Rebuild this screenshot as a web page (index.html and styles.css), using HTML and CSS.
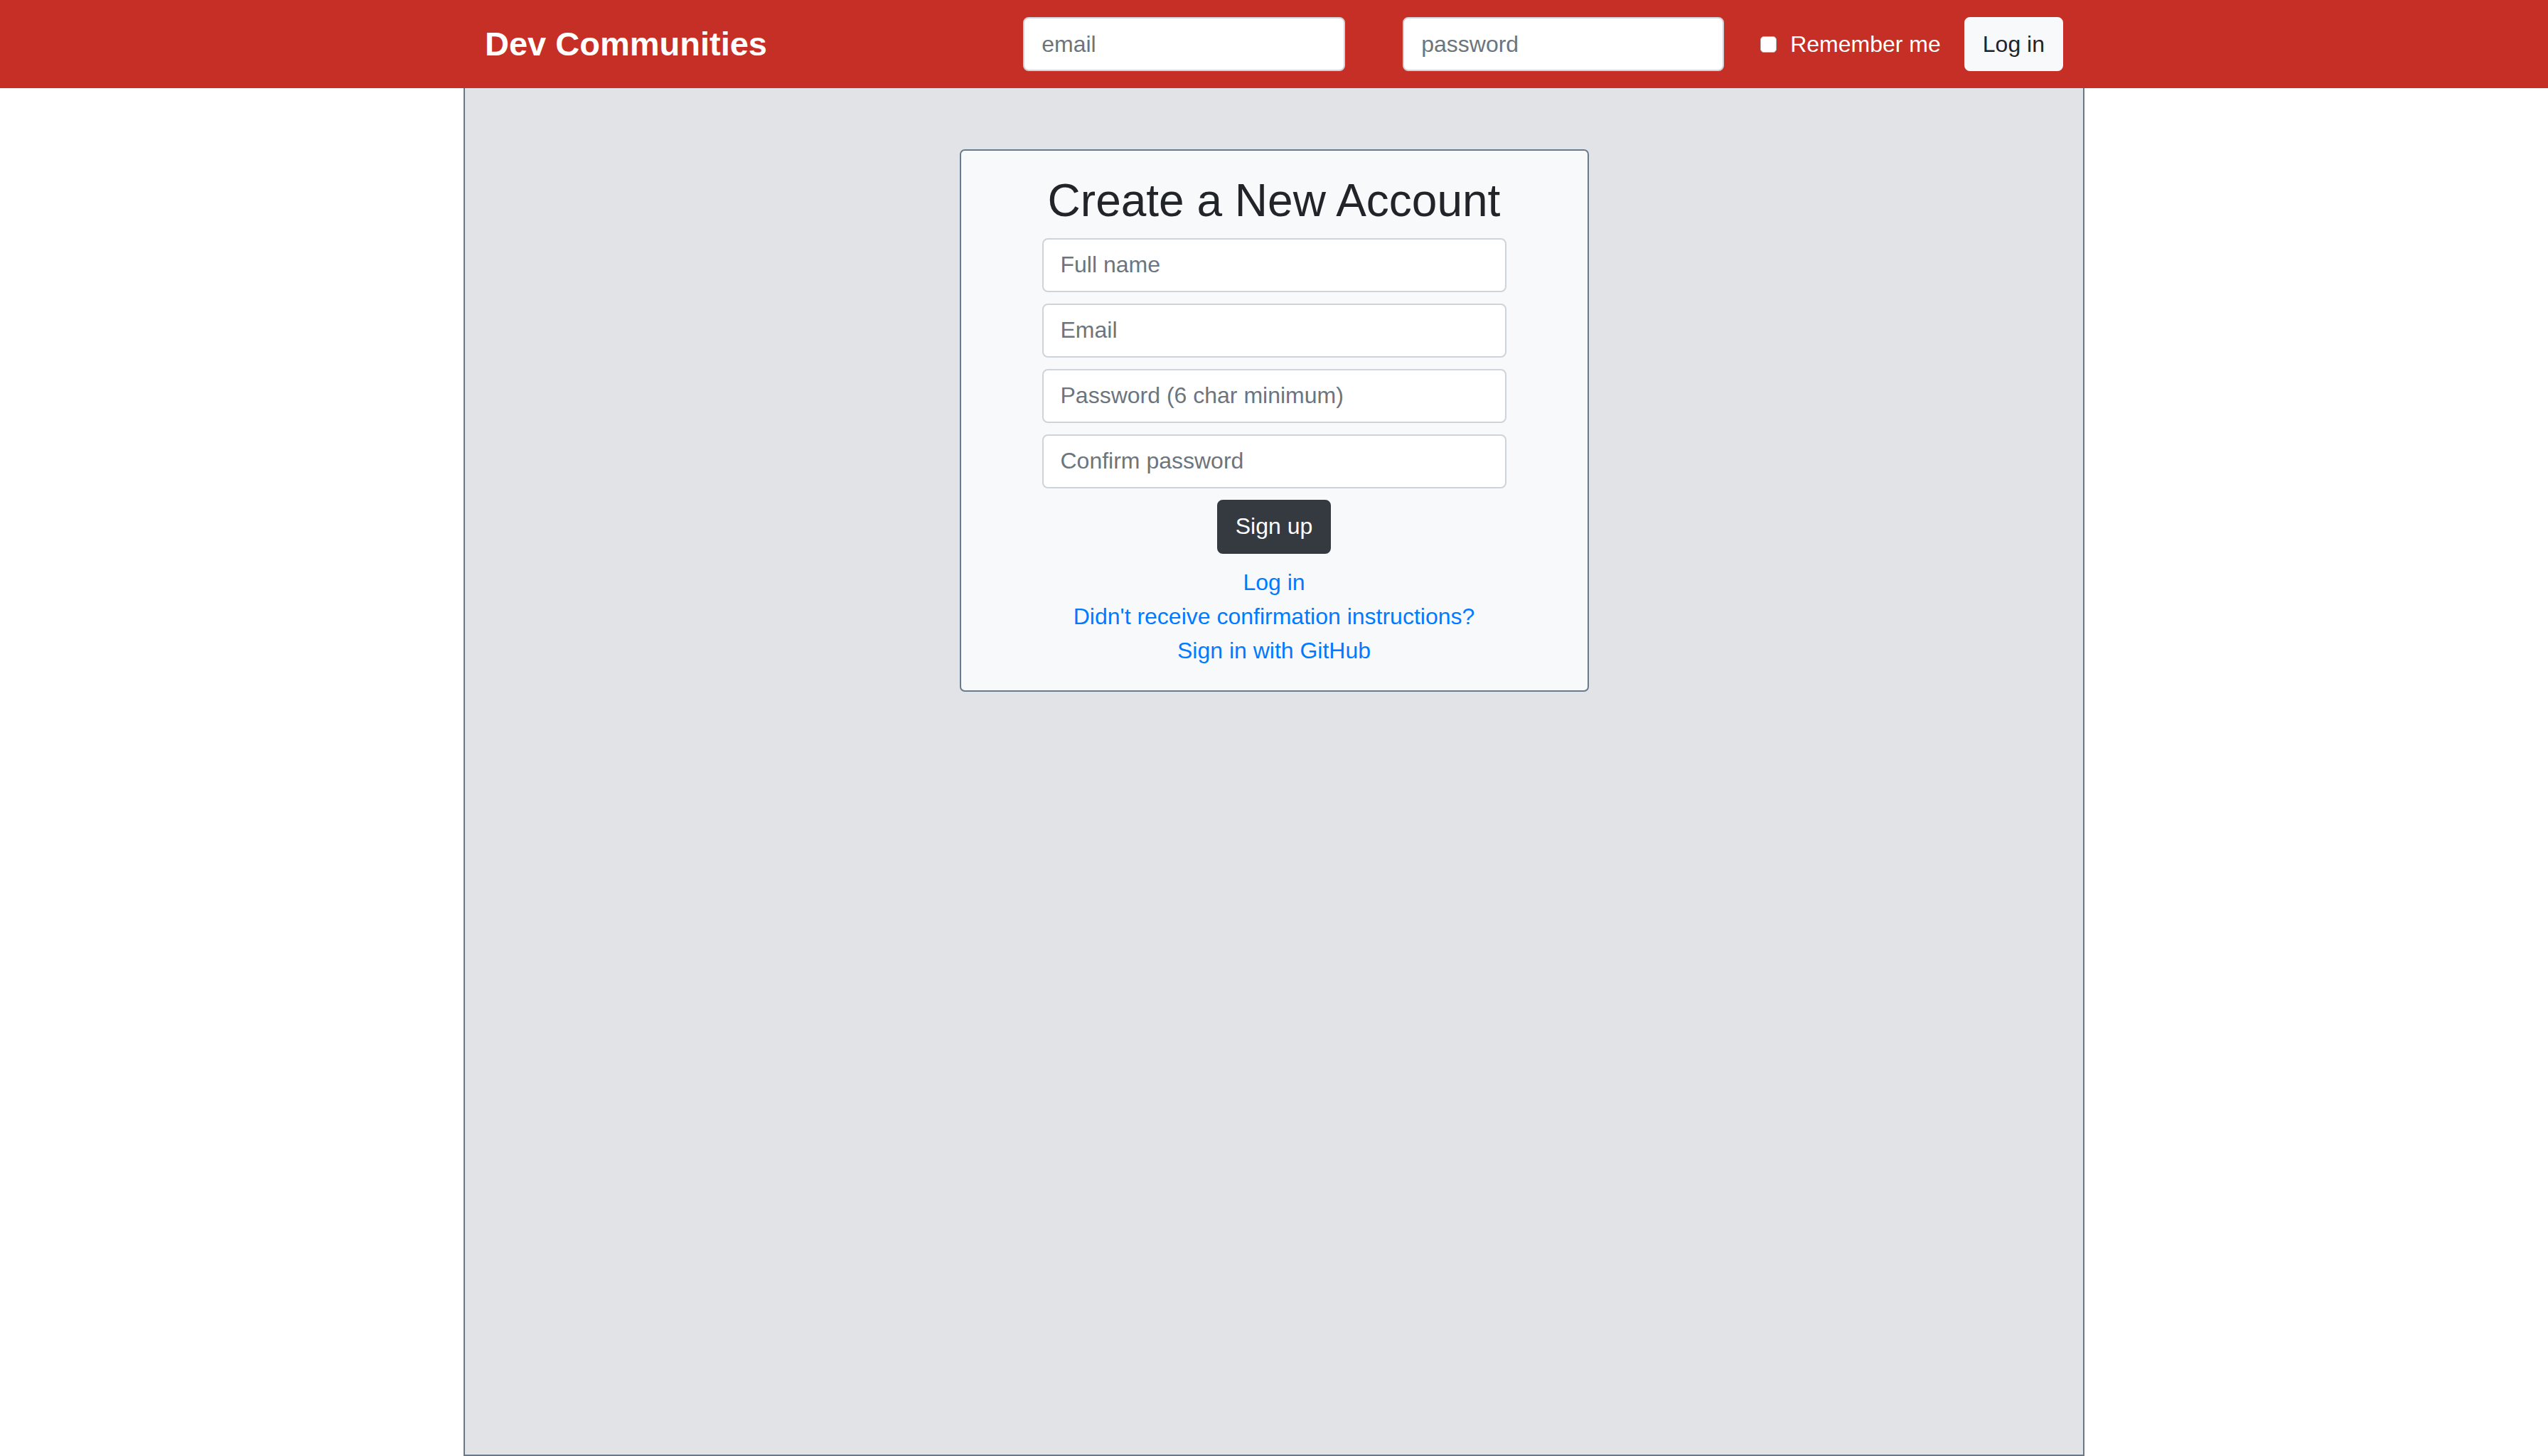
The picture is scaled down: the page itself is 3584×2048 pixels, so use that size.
FILE: index.html
```html
<!DOCTYPE html>
<html lang="en">
<head>
<meta charset="utf-8">
<title>Dev Communities</title>
<link rel="stylesheet" href="styles.css">
</head>
<body>
<nav class="navbar">
  <div class="navbar-inner">
    <a class="brand" href="#">Dev Communities</a>
    <form class="login-form">
      <input class="nav-input nav-email" type="email" placeholder="email">
      <input class="nav-input nav-password" type="password" placeholder="password">
      <label class="remember"><input class="check" type="checkbox"><span>Remember me</span></label>
      <button class="btn-light" type="button">Log in</button>
    </form>
  </div>
</nav>
<main class="main">
  <div class="card">
    <h2 class="title">Create a New Account</h2>
    <form class="signup-form">
      <input class="field" type="text" placeholder="Full name">
      <input class="field" type="email" placeholder="Email">
      <input class="field" type="password" placeholder="Password (6 char minimum)">
      <input class="field" type="password" placeholder="Confirm password">
      <button class="btn-dark" type="button">Sign up</button>
    </form>
    <div class="links">
      <a href="#">Log in</a>
      <a href="#">Didn't receive confirmation instructions?</a>
      <a href="#">Sign in with GitHub</a>
    </div>
  </div>
</main>
</body>
</html>
```

FILE: styles.css
```css
* { box-sizing: border-box; }
html, body { margin: 0; padding: 0; }
body {
  font-family: "Liberation Sans", Arial, Helvetica, sans-serif;
  font-size: 32px;
  line-height: 1.5;
  color: #212529;
  background: #ffffff;
}
.navbar {
  background: #c62f25;
  height: 124px;
}
.navbar-inner {
  width: 2280px;
  height: 124px;
  margin: 0 auto;
  padding: 0 30px;
  display: flex;
  align-items: center;
  justify-content: space-between;
}
.brand {
  color: #ffffff;
  font-weight: 700;
  font-size: 47px;
  line-height: 72px;
  text-decoration: none;
}
.login-form {
  display: flex;
  align-items: center;
}
.nav-input {
  width: 453px;
  height: 76px;
  padding: 0 24px;
  border: 2px solid #ced4da;
  border-radius: 8px;
  background: #ffffff;
  font-family: inherit;
  font-size: 32px;
  color: #495057;
  outline: none;
}
.nav-input::placeholder, .field::placeholder { color: #6c757d; opacity: 1; }
.nav-email { margin-right: 81px; }
.nav-password { width: 452px; margin-right: 51px; }
.remember {
  display: flex;
  align-items: center;
  color: #ffffff;
  margin-right: 33px;
}
.check {
  -webkit-appearance: none;
  appearance: none;
  width: 23px;
  height: 23px;
  margin: 0 19px 0 0;
  background: #ffffff;
  border: 1px solid #b9b9b9;
  border-radius: 5px;
}
.btn-light {
  height: 76px;
  padding: 0 24px;
  border: 2px solid #f8f9fa;
  border-radius: 8px;
  background: #f8f9fa;
  color: #212529;
  font-family: inherit;
  font-size: 32px;
}
.main {
  width: 2280px;
  height: calc(100vh - 124px);
  margin: 0 auto;
  background: #e2e3e7;
  border: 2px solid #687789;
  border-top: none;
  padding-top: 86px;
}
.card {
  width: 885px;
  margin: 0 auto;
  background: #f8f9fa;
  border: 2px solid #687a8d;
  border-radius: 7px;
  padding: 32px 0;
  text-align: center;
}
.title {
  margin: 0 0 14px;
  font-size: 64px;
  font-weight: 500;
  line-height: 1.2;
  color: #212529;
}
.signup-form {
  display: flex;
  flex-direction: column;
  align-items: center;
  gap: 16px;
}
.field {
  width: 653px;
  height: 76px;
  padding: 0 24px;
  border: 2px solid #ced4da;
  border-radius: 8px;
  background: #ffffff;
  font-family: inherit;
  font-size: 32px;
  color: #495057;
  outline: none;
}
.btn-dark {
  height: 76px;
  padding: 0 24px;
  border: 2px solid #343a40;
  border-radius: 8px;
  background: #343a40;
  color: #ffffff;
  font-family: inherit;
  font-size: 32px;
}
.links {
  margin-top: 16px;
  display: flex;
  flex-direction: column;
  align-items: center;
}
.links a {
  color: #007bff;
  text-decoration: none;
  line-height: 48px;
}
```
